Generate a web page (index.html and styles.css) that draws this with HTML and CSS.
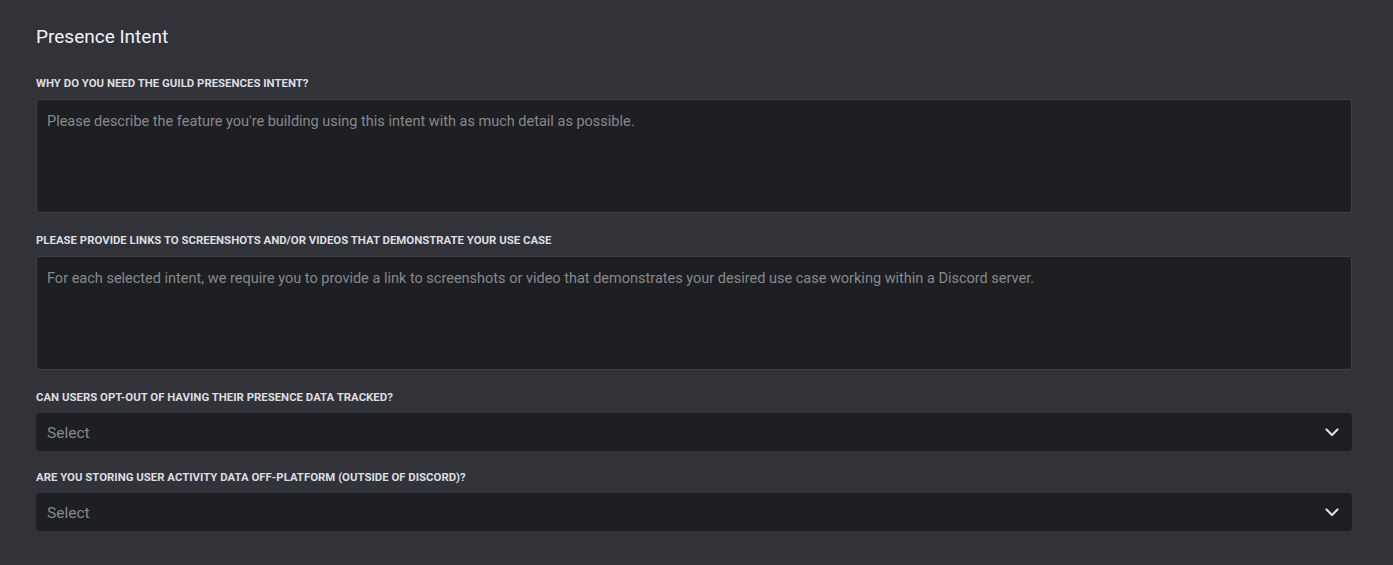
FILE: index.html
```html
<!DOCTYPE html>
<html lang="en">
<head>
<meta charset="utf-8">
<link rel="stylesheet" href="styles.css">
</head>
<body>
<main class="page">
  <h2 class="title">Presence Intent</h2>
  <div class="field">
    <label class="label">Why do you need the guild presences intent?</label>
    <div class="textarea"><span class="placeholder">Please describe the feature you're building using this intent with as much detail as possible.</span></div>
  </div>
  <div class="field">
    <label class="label">Please provide links to screenshots and/or videos that demonstrate your use case</label>
    <div class="textarea"><span class="placeholder">For each selected intent, we require you to provide a link to screenshots or video that demonstrates your desired use case working within a Discord server.</span></div>
  </div>
  <div class="field">
    <label class="label">Can users opt-out of having their presence data tracked?</label>
    <div class="select"><span class="placeholder select-text">Select</span>
      <svg class="chev" width="14" height="9" viewBox="0 0 14 9"><path d="M1.5 1.5 7 7l5.5-5.5" fill="none" stroke="#dbdee1" stroke-width="2.2" stroke-linecap="round" stroke-linejoin="round"/></svg>
    </div>
  </div>
  <div class="field">
    <label class="label">Are you storing user activity data off-platform (outside of Discord)?</label>
    <div class="select"><span class="placeholder select-text">Select</span>
      <svg class="chev" width="14" height="9" viewBox="0 0 14 9"><path d="M1.5 1.5 7 7l5.5-5.5" fill="none" stroke="#dbdee1" stroke-width="2.2" stroke-linecap="round" stroke-linejoin="round"/></svg>
    </div>
  </div>
</main>
</body>
</html>
```
FILE: styles.css
```css
* { box-sizing: border-box; }
html, body { margin: 0; padding: 0; background: #313338; }
body { font-family: Roboto, "Noto Sans", sans-serif; color: #dbdee1; }
.page { padding: 25px 41px 24px 36px; }
.title { margin: 0 0 26px; font-size: 19px; line-height: 24px; font-weight: 400; color: #f2f3f5; }
.field { margin-bottom: 19px; }
.field:nth-child(4) { margin-bottom: 18px; }
.label { display: block; font-size: 11.4px; line-height: 16px; font-weight: 700; text-transform: uppercase; color: #dbdee1; margin-bottom: 8px; }
.textarea { height: 114px; background: #1e1f22; border: 1px solid #3f4147; border-radius: 3px; padding: 11px 10px; }
.placeholder { font-size: 14.5px; line-height: 20px; color: #87898c; }
.select { height: 38px; background: #1e1f22; border-radius: 4px; display: flex; align-items: center; justify-content: space-between; padding: 1px 13px 0 11px; }
.select-text { font-size: 15.5px; }
.chev { display: block; }
```
